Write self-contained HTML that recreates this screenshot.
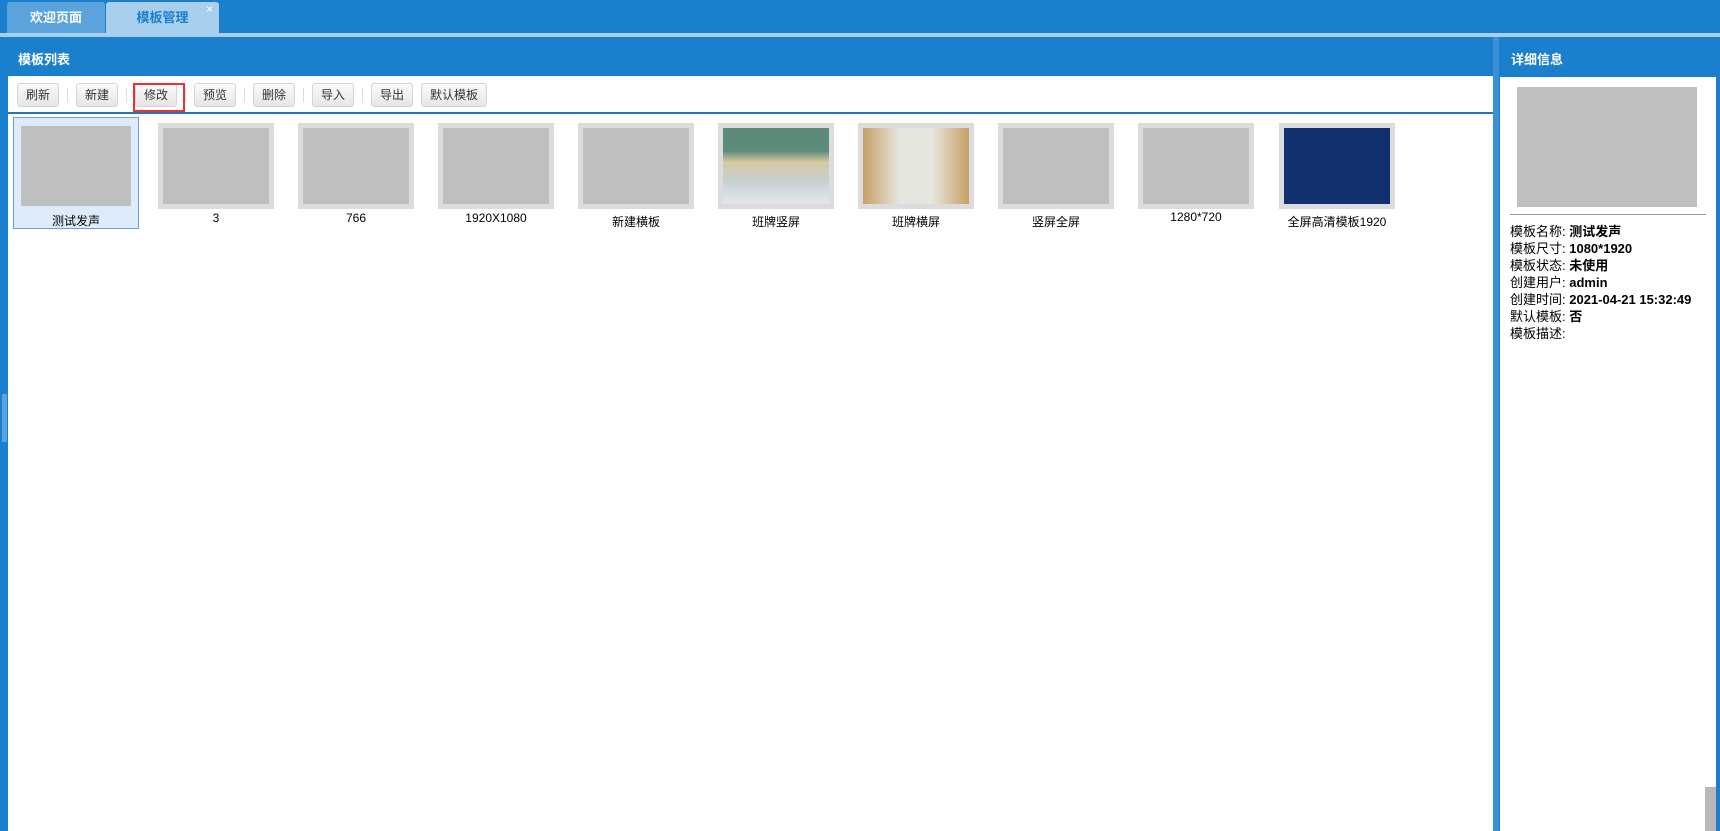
<!DOCTYPE html>
<html><head><meta charset="utf-8"><style>
*{margin:0;padding:0;box-sizing:border-box}
body{width:1720px;height:831px;overflow:hidden;background:#1a7fcc;font-family:"Liberation Sans","Noto Sans CJK SC",sans-serif;position:relative;font-size:12px}
.abs{position:absolute}
.tab{position:absolute;top:2px;height:31px;line-height:31px;text-align:center;font-size:13px;font-weight:bold;border-radius:3px 3px 0 0}
.btn{position:absolute;top:83px;height:24px;line-height:22px;border:1px solid #d4d4d4;border-radius:3px;background:linear-gradient(#fafafa,#e6e6e6);font-size:12px;color:#333;text-align:center}
.sep{position:absolute;top:88px;width:1px;height:14px;background:#ddd}
.th{position:absolute;top:123px;width:116px;height:86px;background:#bfbfbf;border:5px solid #dcdcdc}
.lb{position:absolute;top:211px;width:140px;text-align:center;font-size:12px;color:#000}
.info{position:absolute;left:1510px;font-size:13px;line-height:17px;color:#000}
.info b{font-weight:bold}
</style></head><body>
<div class="abs" style="left:0;top:33px;width:1720px;height:4px;background:#a8d0ee"></div>
<div class="tab" style="left:7px;width:98px;background:#5aa3dc;color:#fff">欢迎页面</div>
<div class="tab" style="left:106px;width:113px;background:#a8d0ee;color:#1a7fcc">模板管理</div>
<div class="abs" style="left:206px;top:2px;color:#fff;font-size:12px">×</div>
<div class="abs" style="left:18px;top:49px;color:#fff;font-weight:bold;font-size:13px">模板列表</div>
<div class="abs" style="left:8px;top:76px;width:1485px;height:755px;background:#fff"></div>
<div class="abs" style="left:8px;top:112px;width:1485px;height:2px;background:#2a74b8"></div>
<div class="abs" style="left:1493px;top:37px;width:6px;height:794px;background:#3a90d8"></div>
<div class="abs" style="left:1511px;top:49px;color:#fff;font-weight:bold;font-size:13px">详细信息</div>
<div class="abs" style="left:1500px;top:77px;width:216px;height:754px;background:#fff"></div>
<div class="abs" style="left:2px;top:394px;width:5px;height:48px;background:#5aa3dc"></div>
<div class="abs" style="left:1705px;top:787px;width:11px;height:44px;background:#b8b8b8"></div>

<div class="btn" style="left:17px;width:42px">刷新</div><div class="sep" style="left:67px"></div>
<div class="btn" style="left:76px;width:42px">新建</div><div class="sep" style="left:126px"></div>
<div class="btn" style="left:135px;width:42px">修改</div>
<div class="abs" style="left:133px;top:83px;width:52px;height:29px;border:2px solid #e53333"></div>
<div class="sep" style="left:185px"></div>
<div class="btn" style="left:194px;width:42px">预览</div><div class="sep" style="left:244px"></div>
<div class="btn" style="left:253px;width:42px">删除</div><div class="sep" style="left:303px"></div>
<div class="btn" style="left:312px;width:42px">导入</div><div class="sep" style="left:362px"></div>
<div class="btn" style="left:371px;width:42px">导出</div>
<div class="btn" style="left:421px;width:66px">默认模板</div>

<div class="abs" style="left:13px;top:117px;width:126px;height:112px;background:#deebfb;border:1px solid #6a9fe0"></div>
<div class="abs" style="left:21px;top:126px;width:110px;height:80px;background:#bfbfbf"></div>
<div class="lb" style="left:6px;top:212px">测试发声</div>

<div class="th" style="left:158px"></div><div class="lb" style="left:146px">3</div>
<div class="th" style="left:298px"></div><div class="lb" style="left:286px">766</div>
<div class="th" style="left:438px"></div><div class="lb" style="left:426px">1920X1080</div>
<div class="th" style="left:578px"></div><div class="lb" style="left:566px;top:213px">新建横板</div>
<div class="th" style="left:718px;background:linear-gradient(180deg,#5d8a79 0,#5d8a79 30%,#d9c9a2 45%,#c6d0d2 70%,#e2e8ea 100%)"></div><div class="lb" style="left:706px;top:213px">班牌竖屏</div>
<div class="th" style="left:858px;background:linear-gradient(90deg,#c7a064 0,#e6e6e0 35%,#e6e6e0 65%,#c7a064 100%)"></div><div class="lb" style="left:846px;top:213px">班牌横屏</div>
<div class="th" style="left:998px"></div><div class="lb" style="left:986px;top:213px">竖屏全屏</div>
<div class="th" style="left:1138px"></div><div class="lb" style="left:1126px;top:210px">1280*720</div>
<div class="th" style="left:1279px;background:#13306e"></div><div class="lb" style="left:1267px;top:213px">全屏高清模板1920</div>

<div class="abs" style="left:1517px;top:87px;width:180px;height:120px;background:#bfbfbf"></div>
<div class="abs" style="left:1510px;top:214px;width:196px;height:1px;background:#999"></div>
<div class="info" style="top:223px">模板名称: <b>测试发声</b><br>模板尺寸: <b>1080*1920</b><br>模板状态: <b>未使用</b><br>创建用户: <b>admin</b><br>创建时间: <b>2021-04-21 15:32:49</b><br>默认模板: <b>否</b><br>模板描述:</div>
</body></html>
